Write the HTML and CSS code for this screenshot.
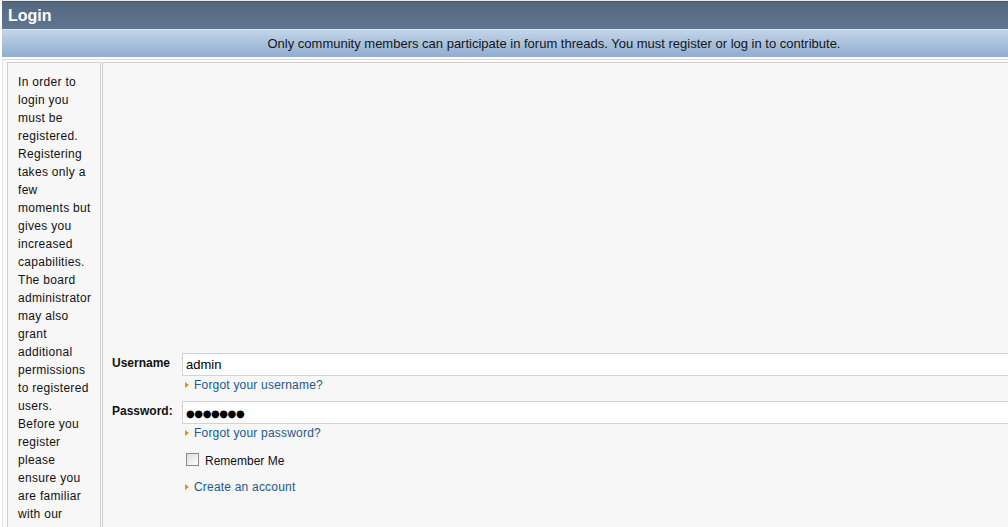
FILE: index.html
```html
<!DOCTYPE html>
<html>
<head>
<meta charset="utf-8">
<title>Login</title>
<link rel="stylesheet" href="styles.css">
</head>
<body>
<div class="page">
  <div class="hd">Login</div>
  <div class="sub">Only community members can participate in forum threads. You must register or log in to contribute.</div>
  <div class="content">
    <div class="side">In order to login you must be registered. Registering takes only a few moments but gives you increased capabilities. The board administrator may also grant additional permissions to registered users. Before you register please ensure you are familiar with our terms of use and related policies.</div>
    <div class="main">
      <form class="login">
        <label class="lbl">Username</label>
        <div class="field"><input class="inp" type="text" value="admin"></div>
        <span></span>
        <a class="lnk" href="#">Forgot your username?</a>
        <label class="lbl">Password:</label>
        <div class="field pw"><span class="dots">●●●●●●●</span></div>
        <span></span>
        <a class="lnk" href="#">Forgot your password?</a>
        <span></span>
        <label class="remember"><span class="cb"></span>Remember Me</label>
        <span></span>
        <a class="lnk create" href="#">Create an account</a>
      </form>
    </div>
  </div>
</div>
</body>
</html>
```
FILE: styles.css
```css
html, body {
  margin: 0;
  padding: 0;
  background: #ffffff;
  overflow: hidden;
}
body {
  font-family: "Liberation Sans", Arial, sans-serif;
  font-size: 12px;
  color: #111;
}
.page {
  width: 1104px;
  margin-left: 2px;
  border-top: 1px solid #e9e9e9;
}
.hd {
  height: 27px;
  line-height: 28px;
  padding-left: 6px;
  color: #fff;
  font-weight: bold;
  font-size: 16px;
  background: linear-gradient(#54687f, #5f7590);
  border-top: 1px solid #46586c;
}
.sub {
  height: 27px;
  line-height: 27px;
  text-align: center;
  color: #151515;
  font-size: 13px;
  border-top: 1px solid #d6e3f0;
  background: linear-gradient(#c3d5e9, #8fadcf);
}
.content {
  display: flex;
  align-items: stretch;
  gap: 1px;
  margin-top: 2px;
  padding: 2px 0 0 4px;
  border-top: 1px solid #dcdcdc;
  border-left: 1px solid #e4e4e4;
  background: #fbfbfb;
  height: 600px;
}
.side {
  width: 73.6px;
  flex: none;
  padding: 10px 8.4px 0 10px;
  line-height: 18px;
  letter-spacing: 0.3px;
  background: #f7f7f7;
  border: 1px solid #d0d0d0;
  border-bottom: none;
}
.main {
  flex: 1;
  background: #f7f7f7;
  border: 1px solid #d0d0d0;
  border-bottom: none;
  padding: 290px 0 0 9px;
}
.login {
  display: grid;
  grid-template-columns: 70px 1fr;
  align-items: start;
}
.lbl {
  font-weight: bold;
  padding-top: 3px;
  line-height: 14px;
}
.field {
  height: 21px;
  background: #fff;
  border: 1px solid #d3d3d3;
  box-sizing: content-box;
}
.inp {
  width: 100%;
  height: 21px;
  border: none;
  padding: 0 0 0 3px;
  margin: 0;
  font-family: "Liberation Sans", Arial, sans-serif;
  font-size: 13px;
  color: #000;
  background: transparent;
  outline: none;
  box-sizing: border-box;
}
.pw {
  display: flex;
  align-items: center;
  padding-left: 3px;
}
.dots {
  font-family: "DejaVu Sans", sans-serif;
  font-size: 10px;
  letter-spacing: -0.4px;
  color: #000;
  padding-top: 1px;
}
.lnk {
  position: relative;
  color: #22588a;
  text-decoration: none;
  padding-left: 12px;
  line-height: 14px;
  letter-spacing: 0.2px;
  margin: 2px 0 9px 0;
  justify-self: start;
}
.lnk::before {
  content: "";
  position: absolute;
  left: 3px;
  top: 4px;
  border-left: 4px solid #e8901c;
  border-top: 3.5px solid transparent;
  border-bottom: 3.5px solid transparent;
}
.remember {
  display: flex;
  align-items: center;
  gap: 6px;
  padding-left: 4px;
  margin: 5px 0 12px 0;
  height: 14px;
  color: #111;
}
.cb {
  width: 11px;
  height: 11px;
  border: 1px solid #8a8a8a;
  background: linear-gradient(135deg, #dcdcdc, #ffffff);
  margin-top: -3px;
}
.create {
  margin-top: 0;
}
```
